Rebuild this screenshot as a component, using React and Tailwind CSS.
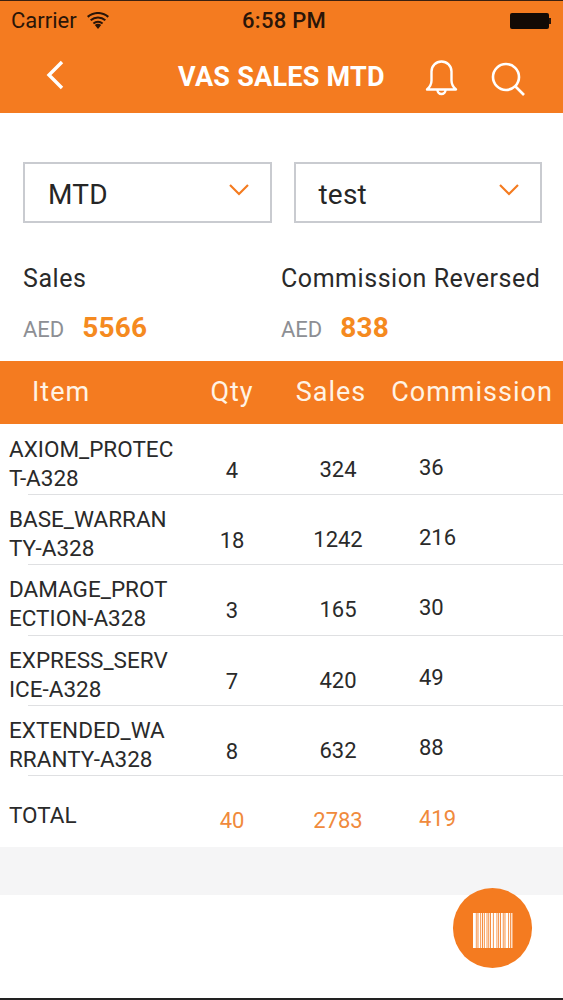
import React from "react";

const rows = [
  ["AXIOM_PROTEC", "T-A328", "4", "324", "36"],
  ["BASE_WARRAN", "TY-A328", "18", "1242", "216"],
  ["DAMAGE_PROT", "ECTION-A328", "3", "165", "30"],
  ["EXPRESS_SERV", "ICE-A328", "7", "420", "49"],
  ["EXTENDED_WA", "RRANTY-A328", "8", "632", "88"],
];

function Chevron() {
  return (
    <svg width="20" height="13" viewBox="0 0 20 13" fill="none" stroke="#f47b20" strokeWidth="2.2" className="mb-1.5">
      <path d="M1 2l9 9 9-9" />
    </svg>
  );
}

function Select({ label }) {
  return (
    <div className="flex-1 h-[61px] border-2 border-[#c9cbd0] flex items-center justify-between pl-[23px] pr-[21px]">
      <span className="text-[28px] leading-[36px] pt-[4px] text-[#262626] tracking-[0.2px]">{label}</span>
      <Chevron />
    </div>
  );
}

function Stat({ title, value, className }) {
  return (
    <div className={className}>
      <div className="text-[25px] leading-[30px] pt-[1px] text-[#2a2a2a] tracking-[0.55px]">{title}</div>
      <div className="flex items-baseline gap-[18px] mt-[19px]">
        <span className="text-[22px] leading-[30px] text-[#8d8f94]">AED</span>
        <span className="text-[28px] leading-[30px] font-bold text-[#f58a1f] tracking-[0.2px]">{value}</span>
      </div>
    </div>
  );
}

function Barcode() {
  const bars = [3, 1, 2, 1, 1, 2, 1, 1, 2, 3, 1, 1, 2, 1, 3, 1, 1, 2, 2, 1, 1];
  return (
    <svg width="40" height="35" viewBox="0 0 40 35" fill="#fff" className="mt-[4px]">
      {bars.map((w, i) => {
        const x = bars.slice(0, i).reduce((a, b) => a + b + 1, 0) * 0.9;
        return <rect key={i} x={x} y="0" width={w * 0.95} height="35" />;
      })}
    </svg>
  );
}

export default function App() {
  return (
    <div className="relative w-[563px] h-[1000px] overflow-hidden bg-white font-['Roboto',sans-serif] border-b-2 border-[#222]">
      <header className="h-[113px] bg-[#f47b20] border-t border-[#3a2010]">
        <div className="h-[39px] flex items-center justify-between pl-[11px] pr-[12px] relative text-[#2a1508]">
          <div className="flex items-center gap-[10px]">
            <span className="text-[22px]">Carrier</span>
            <svg width="22" height="17" viewBox="0 0 22 17" fill="#2a1508">
              <path d="M11 17l-3.2-3.9a5 5 0 0 1 6.4 0z" />
              <path d="M5.8 10.7a8 8 0 0 1 10.4 0l-1.2 1.5a6 6 0 0 0-8 0z" />
              <path d="M3 7.4a12.4 12.4 0 0 1 16 0l-1.3 1.6a10.2 10.2 0 0 0-13.4 0z" />
              <path d="M0 4a17 17 0 0 1 22 0l-1.4 1.7a14.6 14.6 0 0 0-19.2 0z" />
            </svg>
          </div>
          <span className="absolute left-[242px] text-[22px] font-medium tracking-[0.3px]">6:58 PM</span>
          <div className="flex items-center">
            <div className="w-[39px] h-[16px] rounded-[2px] bg-[#120a05]" />
            <div className="w-[2px] h-[6px] bg-[#2a1508]" />
          </div>
        </div>
        <div className="relative h-[73px] text-white">
          <svg className="absolute left-[45px] top-[19px]" width="20" height="32" viewBox="0 0 20 32" fill="none" stroke="#fff" strokeWidth="3.4">
            <path d="M17 3L4 16l13 13" />
          </svg>
          <span className="absolute left-[178px] top-[19px] text-[27px] leading-[36px] font-bold tracking-[0.25px]">VAS SALES MTD</span>
          <svg className="absolute left-[425px] top-[20px]" width="33" height="36" viewBox="0 0 33 36" fill="none" stroke="#fff" strokeWidth="2.4" strokeLinejoin="round">
            <path d="M2 29.5c2.8-2.5 4.5-4.5 4.5-9V11.5a10 10 0 0 1 20 0v9c0 4.500 1.700 6.500 4.500 9z" />
            <path d="M12.500 30a4 4 0 0 0 8 0" />
          </svg>
          <svg className="absolute left-[491px] top-[22px]" width="36" height="36" viewBox="0 0 36 36" fill="none" stroke="#fff" strokeWidth="2.6">
            <circle cx="15" cy="15" r="13" />
            <path d="M24 24l9 9" />
          </svg>
        </div>
      </header>

      <div className="flex gap-[22px] pl-[23px] pr-[21px] pt-[49px]">
        <Select label="MTD" />
        <Select label="test" />
      </div>

      <div className="flex pl-[23px] pt-[40px] h-[138px]">
        <Stat title="Sales" value="5566" className="w-[258px]" />
        <Stat title="Commission Reversed" value="838" />
      </div>

      <div className="grid grid-cols-[190px_84px_114px_168px] items-center h-[63px] bg-[#f47b20] text-[27px] text-[#fff3e4] tracking-[1px]">
        <span className="pl-[32px]">Item</span>
        <span className="text-center">Qty</span>
        <span className="text-center">Sales</span>
        <span className="text-center">Commission</span>
      </div>

      {rows.map((r) => (
        <div key={r[0]} className="relative grid grid-cols-[190px_84px_128px_80px] items-center h-[70.2px] text-[#2a2a2a]">
          <div className="pl-[9px] text-[22.500px] leading-[29px] pt-[10px] whitespace-nowrap">
            <div>{r[0]}</div>
            <div>{r[1]}</div>
          </div>
          <span className="text-center text-[22px] pt-[23px]">{r[2]}</span>
          <span className="text-center text-[22px] pt-[21px]">{r[3]}</span>
          <span className="pl-[17px] text-[22px] pt-[16px] whitespace-nowrap">{r[4]}</span>
          <div className="absolute left-[28px] right-0 -bottom-px h-px bg-[#dfe0e2]" />
        </div>
      ))}

      <div className="grid grid-cols-[190px_84px_128px_80px] items-center h-[72px] text-[#f08a3c] text-[22px]">
        <span className="pl-[9px] text-[#2a2a2a] text-[22.500px] pt-[10px]">TOTAL</span>
        <span className="text-center pt-[20px]">40</span>
        <span className="text-center pt-[20px]">2783</span>
        <span className="pl-[17px] pt-[16px]">419</span>
      </div>

      <div className="h-[48px] bg-[#f5f5f6]" />

      <button className="absolute left-[453px] top-[888px] w-[79px] h-[80px] rounded-full bg-[#f47b20] flex items-center justify-center">
        <Barcode />
      </button>
    </div>
  );
}
